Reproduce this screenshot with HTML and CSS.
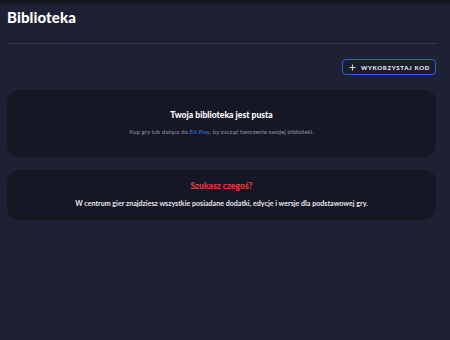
FILE: index.html
```html
<!DOCTYPE html>
<html lang="pl">
<head>
<meta charset="utf-8">
<title>Biblioteka</title>
<link rel="stylesheet" href="styles.css">
</head>
<body>
<div class="page">
  <h1 class="title">Biblioteka</h1>
  <hr class="sep">
  <div class="actions">
    <button class="redeem">
      <svg class="plus" width="7" height="7" viewBox="0 0 7 7"><path d="M3.5 0.5V6.5M0.5 3.5H6.5" stroke="#c9ccd6" stroke-width="1.1" fill="none"/></svg>
      <span>WYKORZYSTAJ KOD</span>
    </button>
  </div>
  <section class="card card-empty">
    <h2 class="card-title">Twoja biblioteka jest pusta</h2>
    <p class="card-sub">Kup gry lub dołącz do <a class="link" href="#">EA Play</a>, by zacząć tworzenie swojej biblioteki.</p>
  </section>
  <section class="card card-search">
    <h2 class="card-title red">Szukasz czegoś?</h2>
    <p class="card-body">W centrum gier znajdziesz wszystkie posiadane dodatki, edycje i wersje dla podstawowej gry.</p>
  </section>
</div>
</body>
</html>
```

FILE: styles.css
```css
html, body {
  margin: 0;
  padding: 0;
}
body {
  width: 450px;
  height: 340px;
  background: linear-gradient(#13141d 0, #191a28 3px, #1e2033 5px, #1e2033 100%);
  font-family: Lato, "Noto Sans", sans-serif;
  color: #ffffff;
  overflow: hidden;
}
.page {
  padding: 0 13px 0 7px;
}
.title {
  margin: 0;
  padding-top: 8px;
  font-size: 15px;
  line-height: 18px;
  font-weight: 900;
  letter-spacing: 0.1px;
}
.sep {
  margin: 17px 0 0 0;
  border: 0;
  height: 1px;
  background: #33364a;
}
.actions {
  display: flex;
  justify-content: flex-end;
  margin-top: 15px;
  padding-right: 1px;
}
.redeem {
  display: flex;
  align-items: center;
  gap: 5px;
  height: 16px;
  padding: 0 5px 0 6px;
  background: #1b1d2e;
  border: 1.5px solid #2f62db;
  border-radius: 4px;
  color: #e8e9ee;
  font-family: Lato, sans-serif;
  font-size: 6px;
  font-weight: 900;
  letter-spacing: 0.7px;
}
.plus {
  display: block;
}
.card {
  background: #151824;
  border-radius: 12px;
  margin-right: 1px;
  text-align: center;
}
.card-empty {
  margin-top: 15px;
  height: 67px;
  padding-top: 20px;
  box-sizing: border-box;
}
.card-search {
  margin-top: 13px;
  height: 50px;
  padding-top: 11px;
  box-sizing: border-box;
}
.card-title {
  margin: 0;
  font-size: 8.6px;
  line-height: 11px;
  font-weight: 900;
}
.red {
  color: #e53a40;
}
.card-sub {
  margin: 6px 0 0 0;
  font-size: 6.2px;
  line-height: 10px;
  color: #8d90a0;
}
.link {
  color: #3c74e0;
  text-decoration: none;
}
.card-body {
  margin: 7px 0 0 0;
  font-size: 7.1px;
  line-height: 10px;
  color: #e6e7ec;
  font-weight: 700;
}
```
